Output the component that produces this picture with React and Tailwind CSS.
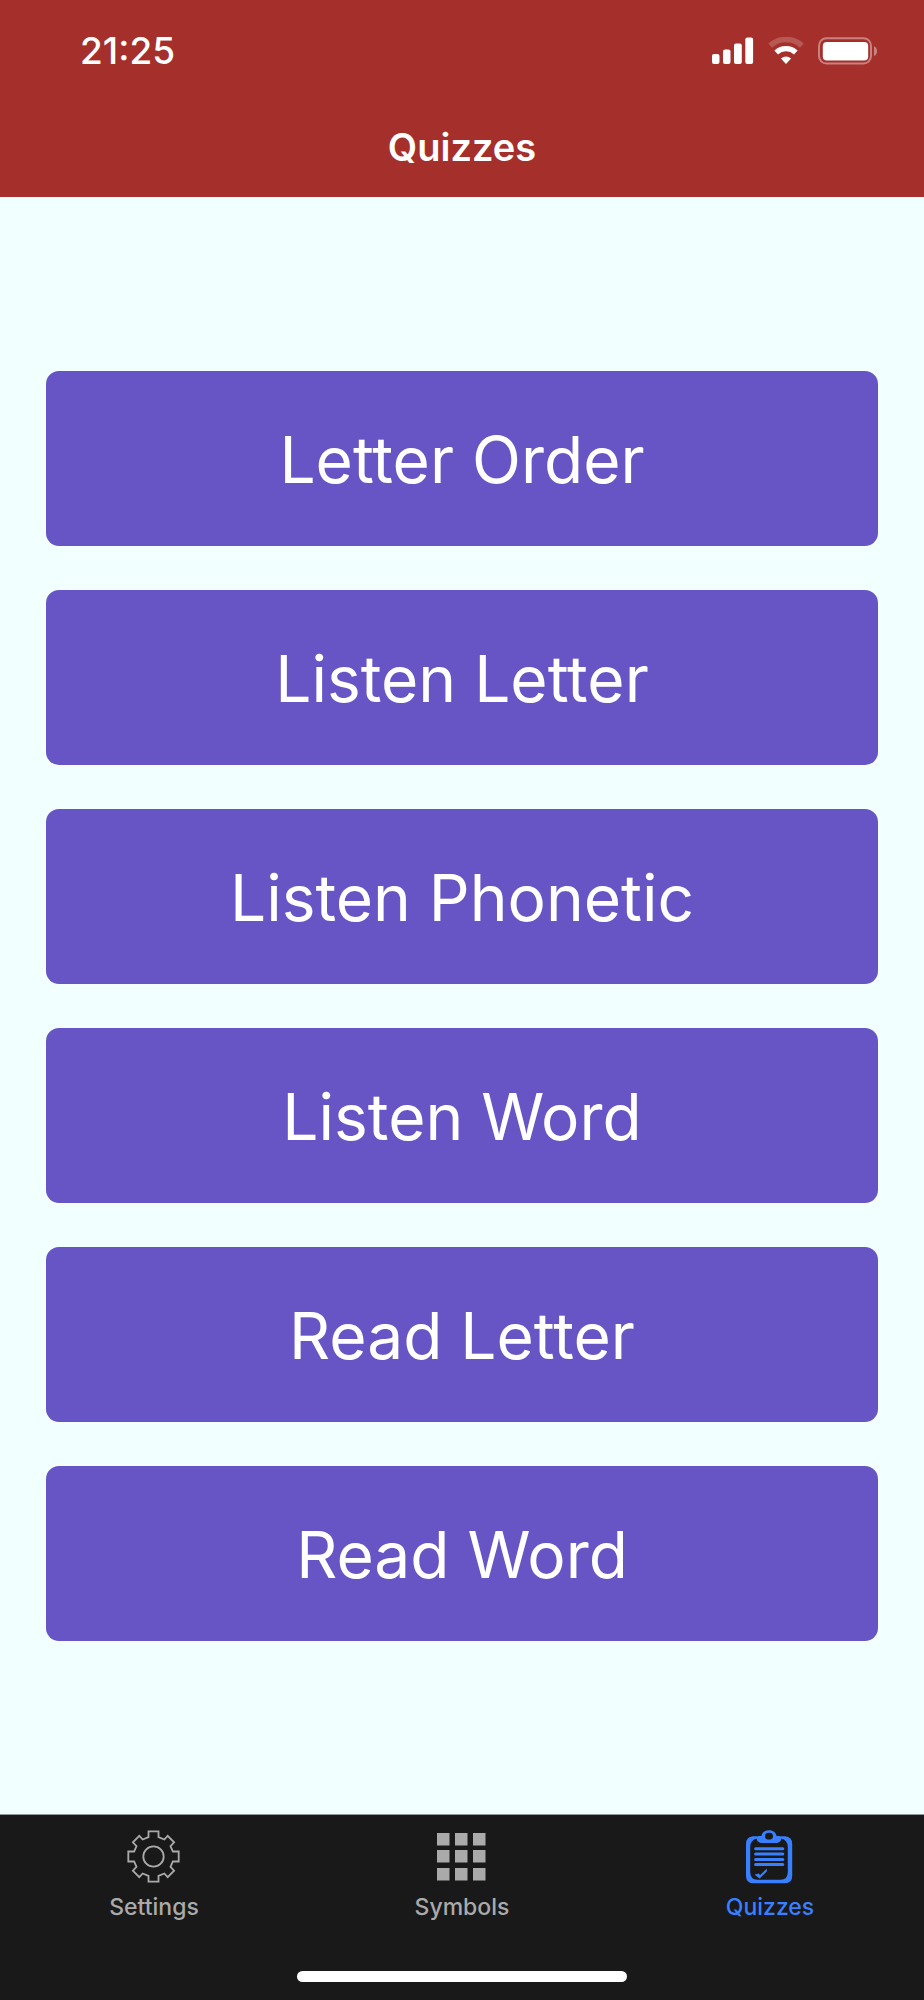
import { useState } from "react";

const quizzes = [
    "Letter Order",
    "Listen Letter",
    "Listen Phonetic",
    "Listen Word",
    "Read Letter",
    "Read Word",
];

function SignalIcon() {
    return (
        <svg className="h-7 w-[42px]" viewBox="0 0 42 28" fill="currentColor" aria-hidden="true">
            <rect x="0" y="17" width="7.5" height="10" rx="2" />
            <rect x="11" y="12.5" width="7.5" height="14.5" rx="2" />
            <rect x="22" y="6.5" width="7.8" height="20.5" rx="2" />
            <rect x="33.3" y="0.5" width="7.8" height="26.5" rx="2" />
        </svg>
    );
}

function WifiIcon() {
    return (
        <svg className="h-7 w-9" viewBox="0 0 36 28" fill="none" stroke="currentColor" aria-hidden="true">
            <path d="M2.2 8.6A23.5 23.5 0 0 1 33.8 8.6" strokeWidth="5.6" strokeOpacity="0.2" />
            <path d="M8.2 15.4A14.6 14.6 0 0 1 27.8 15.4" strokeWidth="5.4" />
            <path d="M18 27L12.9 21.4Q18 17.4 23.1 21.4Z" fill="currentColor" stroke="none" />
        </svg>
    );
}

function BatteryIcon() {
    return (
        <svg className="h-7 w-[60px]" viewBox="0 0 60 28" fill="currentColor" aria-hidden="true">
            <rect x="1" y="1.2" width="52" height="25.4" rx="7.5" fill="none" stroke="currentColor" strokeWidth="2" strokeOpacity="0.4" />
            <rect x="4.8" y="5" width="45.4" height="18.4" rx="4" />
            <path d="M56 9.2C60 10.4 60 17.8 56 19Z" fillOpacity="0.4" />
        </svg>
    );
}

function SettingsIcon() {
    return (
        <svg className="size-[54px]" viewBox="0 0 54 54" fill="none" stroke="currentColor" strokeWidth="1.8" aria-hidden="true">
            <circle cx="26.5" cy="26.5" r="10.2" />
            <path transform="translate(-0.5 -0.5)" d="M22 1.8H32V7.6L37.8 10L41.2 6.4L47.6 12.8L44 16.6L46.4 22H52.2V32H46.4L44 37.4L47.6 41.2L41.2 47.6L37.8 44L32 46.4V52.2H22V46.4L16.2 44L12.8 47.6L6.4 41.2L10 37.4L7.6 32H1.8V22H7.6L10 16.6L6.4 12.8L12.8 6.4L16.2 10L22 7.6Z" />
        </svg>
    );
}

function SymbolsIcon() {
    return (
        <svg className="size-[54px]" viewBox="0 0 54 54" fill="currentColor" aria-hidden="true">
            {[2, 20, 38].map((x) =>
                [3, 20, 38].map((y) => (
                    <rect key={`${x}-${y}`} x={x} y={y} width="12.5" height="12.5" />
                ))
            )}
        </svg>
    );
}

function QuizzesIcon() {
    return (
        <svg className="size-[54px]" viewBox="1 0 54 54" fill="none" stroke="currentColor" aria-hidden="true">
            <path
                fill="currentColor"
                stroke="none"
                fillRule="evenodd"
                d="M15 6.2H11Q4 6.6 4 14V46Q4 53.2 11 53.2H43Q50.2 53.2 50.2 46V14Q50.2 6.6 43 6.2H39V8.5Q45.8 10 45.8 17V42Q45.8 49.8 38.5 49.8H15.5Q8.2 49.8 8.2 42V17Q8.2 10 15 8.5Z"
            />
            <path
                fill="currentColor"
                stroke="none"
                fillRule="evenodd"
                d="M27 0.2C22.8 0.2 20 2.6 19.4 6H16.4Q14.6 6 14.6 8C14.6 11.6 17.4 13 20 13H34C36.6 13 39.4 11.6 39.4 8Q39.4 6 37.6 6H34.6C34 2.6 31.2 0.2 27 0.2ZM27 2.8A4 3.4 0 1 1 27 9.6A4 3.4 0 1 1 27 2.8Z"
            />
            <path d="M13.6 18.7H40.8M13.6 24H40.8M13.6 29.4H40.8M13.6 34.6H40.8" strokeWidth="3" strokeLinecap="round" />
            <path d="M12.6 44.8L16.6 43.6L18.2 45L24.8 38.6V41.6L17.6 48.6Z" fill="currentColor" stroke="none" />
        </svg>
    );
}

const tabs = [
    { name: "Settings", Icon: SettingsIcon },
    { name: "Symbols", Icon: SymbolsIcon },
    { name: "Quizzes", Icon: QuizzesIcon },
];

export default function App() {
    const [activeTab, setActiveTab] = useState("Quizzes");

    return (
        <div className="flex min-h-screen flex-col bg-[#f2ffff] font-['Inter',sans-serif] text-white">
            <header className="bg-[#a52f2b]">
                <div className="flex h-[101px] items-center justify-between pr-[46px] pl-20">
                    <time className="text-[37px] font-medium">21:25</time>
                    <div className="flex items-center gap-[14px]">
                        <SignalIcon />
                        <WifiIcon />
                        <BatteryIcon />
                    </div>
                </div>
                <h1 className="flex h-24 items-start justify-center pt-[18px] text-[38px] leading-[56px] font-semibold">Quizzes</h1>
            </header>

            <main className="flex flex-1 flex-col justify-center gap-11 px-[46px]">
                {quizzes.map((quiz) => (
                    <button
                        key={quiz}
                        type="button"
                        className="h-[175px] rounded-[13px] bg-[#6855c5] pt-1 text-[64px]"
                    >
                        {quiz}
                    </button>
                ))}
            </main>

            <footer className="border-t border-[#8f9999] bg-[#191919]">
                <nav className="grid h-[156px] grid-cols-3 items-start pt-[15px]">
                    {tabs.map(({ name, Icon }) => (
                        <button
                            key={name}
                            type="button"
                            onClick={() => setActiveTab(name)}
                            className={`flex flex-col items-center gap-[7px] text-[23px] leading-8 font-medium ${
                                activeTab === name ? "text-[#3880ff]" : "text-[#aaaaaa]"
                            }`}
                        >
                            <Icon />
                            {name}
                        </button>
                    ))}
                </nav>
                <div className="mx-auto mb-[18px] h-[11px] w-[330px] rounded-full bg-white" />
            </footer>
        </div>
    );
}
